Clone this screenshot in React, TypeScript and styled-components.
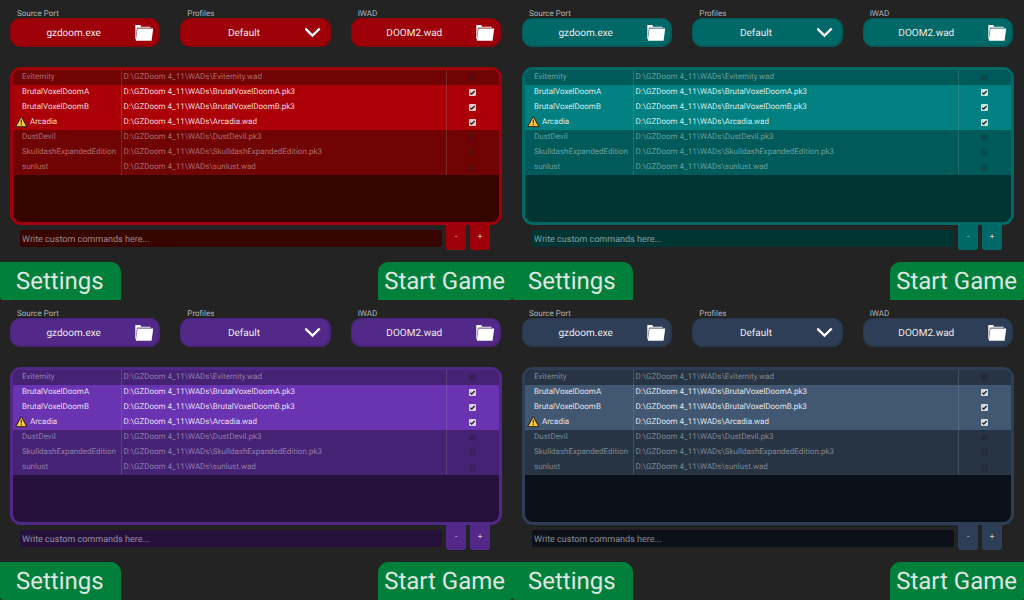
import React from 'react';
import styled, { createGlobalStyle, ThemeProvider } from 'styled-components';

interface Palette {
  name: string;
  button: string;
  edge: string;
  frame: string;
  on: string;
  off: string;
  empty: string;
  onText: string;
  offText: string;
  tickOn: string;
  tickOff: string;
}

declare module 'styled-components' {
  export interface DefaultTheme extends Palette {}
}

const palettes: Palette[] = [
  {
    name: 'red', button: '#9d0008', edge: '#8a0308', frame: '#a00009', on: '#ac0008', off: '#700405',
    empty: '#370500', onText: '#f3d8d9', offText: '#ac6c6d', tickOn: '#ecc9cb', tickOff: '#5d090b',
  },
  {
    name: 'teal', button: '#006866', edge: '#045b59', frame: '#006866', on: '#008080', off: '#005a59',
    empty: '#003534', onText: '#d8eceb', offText: '#6a9f9e', tickOn: '#c9e4e3', tickOff: '#074d4c',
  },
  {
    name: 'purple', button: '#522888', edge: '#492577', frame: '#522888', on: '#6933b2', off: '#452274',
    empty: '#25113c', onText: '#e8dff3', offText: '#927dac', tickOn: '#dcd0ec', tickOff: '#3b2160',
  },
  {
    name: 'slate', button: '#2e3e56', edge: '#2a384c', frame: '#2e3e56', on: '#425772', off: '#273444',
    empty: '#0c1018', onText: '#e1e5ea', offText: '#7f8791', tickOn: '#d5dae0', tickOff: '#242d39',
  },
];

const mods = [
  { name: 'Eviternity', file: 'Eviternity.wad', on: false },
  { name: 'BrutalVoxelDoomA', file: 'BrutalVoxelDoomA.pk3', on: true },
  { name: 'BrutalVoxelDoomB', file: 'BrutalVoxelDoomB.pk3', on: true },
  { name: 'Arcadia', file: 'Arcadia.wad', on: true, warn: true },
  { name: 'DustDevil', file: 'DustDevil.pk3', on: false },
  { name: 'SkulldashExpandedEdition', file: 'SkulldashExpandedEdition.pk3', on: false },
  { name: 'sunlust', file: 'sunlust.wad', on: false },
];

const GlobalStyle = createGlobalStyle`
  *, *::before, *::after { box-sizing: border-box; }
  body { margin: 0; background: #232323; text-rendering: geometricPrecision; }
  body, button, input, select { font-family: Roboto, "Liberation Sans", sans-serif; }
  button, input, select { text-rendering: inherit; }
`;

const Gallery = styled.main`
  display: grid;
  grid-template-columns: 1fr 1fr;
  grid-auto-rows: minmax(300px, 50vh);
`;

const Launcher = styled.section`
  display: flex;
  flex-direction: column;
  min-width: 0;
  background: #232323;
`;

const Pickers = styled.div`
  display: grid;
  grid-template-columns: repeat(3, 1fr);
  gap: 20px;
  padding: 9px 11px 0 10px;
`;

const Picker = styled.div`
  display: flex;
  flex-direction: column;
  min-width: 0;
`;

const Caption = styled.label`
  padding-left: 7px;
  font-size: 8px;
  line-height: 9px;
  color: #b4b4b4;
`;

const Control = styled.div`
  position: relative;
  display: grid;
`;

const pill = `
  width: 100%;
  height: 29px;
  margin: 0;
  padding: 1px 23px 0 0;
  border-radius: 10px;
  font-size: 10px;
  line-height: 13px;
  color: #f0eaec;
  text-align: center;
  text-align-last: center;
`;

const FileButton = styled.button`
  ${pill}
  border: 1px solid ${p => p.theme.edge};
  background: ${p => p.theme.button};
  box-shadow: inset -1px -1px 0 ${p => p.theme.edge};
`;

const ProfileSelect = styled.select`
  ${pill}
  appearance: none;
  border: 1px solid ${p => p.theme.edge};
  background: ${p => p.theme.button};
  box-shadow: inset -1px -1px 0 ${p => p.theme.edge};
`;

const Glyph = styled.svg`
  position: absolute;
  top: 0;
  right: 6px;
  height: 29px;
  width: 20px;
  pointer-events: none;
`;

const ListFrame = styled.div`
  height: 158px;
  margin: 20px 10px 0;
  border: 3px solid ${p => p.theme.frame};
  border-radius: 11px;
  background: ${p => p.theme.empty};
  overflow: hidden;
`;

const ModTable = styled.table`
  width: 100%;
  table-layout: fixed;
  border-collapse: collapse;
  font-size: 8px;
  line-height: 13px;
`;

const NameColumn = styled.col`
  width: 108px;
`;

const TickColumn = styled.col`
  width: 53px;
`;

const ModRow = styled.tr<{ $on: boolean }>`
  height: 15px;
  background: ${p => (p.$on ? p.theme.on : p.theme.off)};
  color: ${p => (p.$on ? p.theme.onText : p.theme.offText)};
`;

const Cell = styled.td`
  padding: 0 0 2px 2px;
  white-space: nowrap;
  border-left: 1px solid rgba(160, 160, 160, 0.25);
`;

const NameCell = styled(Cell)<{ $warn?: boolean }>`
  padding-left: ${p => (p.$warn ? 2 : 9)}px;
  border-left: 0;
`;

const NameLine = styled.span`
  display: flex;
  align-items: center;
  gap: 2px;
`;

const TickCell = styled(Cell)`
  padding: 0;
`;

const Tick = styled.input`
  appearance: none;
  display: grid;
  width: 7px;
  height: 7px;
  margin: 0 auto;
  border-radius: 1px;
  background: ${p => p.theme.tickOff};
  &:checked {
    background: ${p => p.theme.tickOn}
      url("data:image/svg+xml,%3Csvg xmlns='http://www.w3.org/2000/svg' viewBox='0 0 7 7'%3E%3Cpath d='M1.3 3.7l1.4 1.3L5.7 2' fill='none' stroke='%23222' stroke-width='1.3'/%3E%3C/svg%3E");
  }
`;

const CommandBar = styled.div`
  display: flex;
  align-items: flex-start;
  gap: 4px;
  padding: 0 22px 0 20px;
`;

const CommandInput = styled.input`
  flex: 1;
  min-width: 0;
  height: 17px;
  margin: 5px 0 0;
  padding: 2px 2px 0;
  border: 0;
  border-radius: 2px;
  background: ${p => p.theme.empty};
  color: #e0e0e0;
  font-size: 9px;
  &::placeholder { color: rgba(255, 255, 255, 0.52); opacity: 1; }
`;

const StepButton = styled.button`
  width: 20px;
  height: 25px;
  padding: 0 0 2px;
  border: 0;
  border-radius: 0 0 3px 3px;
  background: ${p => p.theme.button};
  color: #dcd0d2;
  font-size: 8px;
  line-height: 10px;
`;

const Footer = styled.footer`
  display: flex;
  justify-content: space-between;
  margin-top: auto;
`;

const FooterButton = styled.button<{ $side: 'left' | 'right' }>`
  height: 38px;
  padding: ${p => (p.$side === 'left' ? '0 17px 0 16px' : '0 7px 0 6px')};
  border: 0;
  border-radius: ${p => (p.$side === 'left' ? '0 10px 0 3px' : '10px 0 3px 0')};
  background: #00803a;
  color: #dfe6e1;
  font-size: 24px;
  line-height: 30px;
`;

const Folder = () => (
  <Glyph viewBox="0 0 20 29" aria-hidden="true">
    <path d="M1.3 21V7H6.4L7 8.7H16.6V9.7H3L1.9 21z" fill="#fff" />
    <path d="M3.4 10.4H19.2L17.6 22.8H1.8z" fill="#fff" />
    <path d="M2.4 17L3.2 10H17" fill="none" stroke="#555" strokeOpacity=".4" strokeWidth=".6" />
  </Glyph>
);

const Chevron = () => (
  <Glyph viewBox="0 0 20 29" aria-hidden="true">
    <path d="M.3 10.5L7.5 17.6L14.7 10.5" fill="none" stroke="#fff" strokeWidth="2.4" />
  </Glyph>
);

const WarningSign = styled.svg`
  width: 13px;
  height: 13px;
  flex: none;
`;

const Warning = () => (
  <WarningSign viewBox="0 0 13 13" role="img" aria-label="Warning">
    <path d="M6.3 1.4L11.9 11.7H.7z" fill="#f7c83f" stroke="#2a2016" strokeWidth="1" strokeLinejoin="round" />
    <path d="M6.3 4.6V8.4M6.3 9.2V10.4" stroke="#2a2016" strokeWidth="1" />
  </WarningSign>
);

function LauncherPanel({ id }: { id: string }) {
  return (
    <Launcher>
      <Pickers>
        <Picker>
          <Caption htmlFor={`${id}-port`}>Source Port</Caption>
          <Control>
            <FileButton id={`${id}-port`}>gzdoom.exe</FileButton>
            <Folder />
          </Control>
        </Picker>
        <Picker>
          <Caption htmlFor={`${id}-profile`}>Profiles</Caption>
          <Control>
            <ProfileSelect id={`${id}-profile`}>
              <option>Default</option>
            </ProfileSelect>
            <Chevron />
          </Control>
        </Picker>
        <Picker>
          <Caption htmlFor={`${id}-iwad`}>IWAD</Caption>
          <Control>
            <FileButton id={`${id}-iwad`}>DOOM2.wad</FileButton>
            <Folder />
          </Control>
        </Picker>
      </Pickers>
      <ListFrame>
        <ModTable>
          <colgroup>
            <NameColumn />
            <col />
            <TickColumn />
          </colgroup>
          <tbody>
            {mods.map(mod => (
              <ModRow key={mod.name} $on={mod.on}>
                <NameCell $warn={mod.warn}>
                  <NameLine>
                    {mod.warn && <Warning />}
                    {mod.name}
                  </NameLine>
                </NameCell>
                <Cell>{`D:\\GZDoom 4_11\\WADs\\${mod.file}`}</Cell>
                <TickCell>
                  <Tick type="checkbox" defaultChecked={mod.on} aria-label={`Load ${mod.name}`} />
                </TickCell>
              </ModRow>
            ))}
          </tbody>
        </ModTable>
      </ListFrame>
      <CommandBar>
        <CommandInput placeholder="Write custom commands here..." aria-label="Custom commands" />
        <StepButton>-</StepButton>
        <StepButton>+</StepButton>
      </CommandBar>
      <Footer>
        <FooterButton $side="left">Settings</FooterButton>
        <FooterButton $side="right">Start Game</FooterButton>
      </Footer>
    </Launcher>
  );
}

export default function App() {
  return (
    <>
      <GlobalStyle />
      <Gallery>
        {palettes.map(palette => (
          <ThemeProvider key={palette.name} theme={palette}>
            <LauncherPanel id={palette.name} />
          </ThemeProvider>
        ))}
      </Gallery>
    </>
  );
}
